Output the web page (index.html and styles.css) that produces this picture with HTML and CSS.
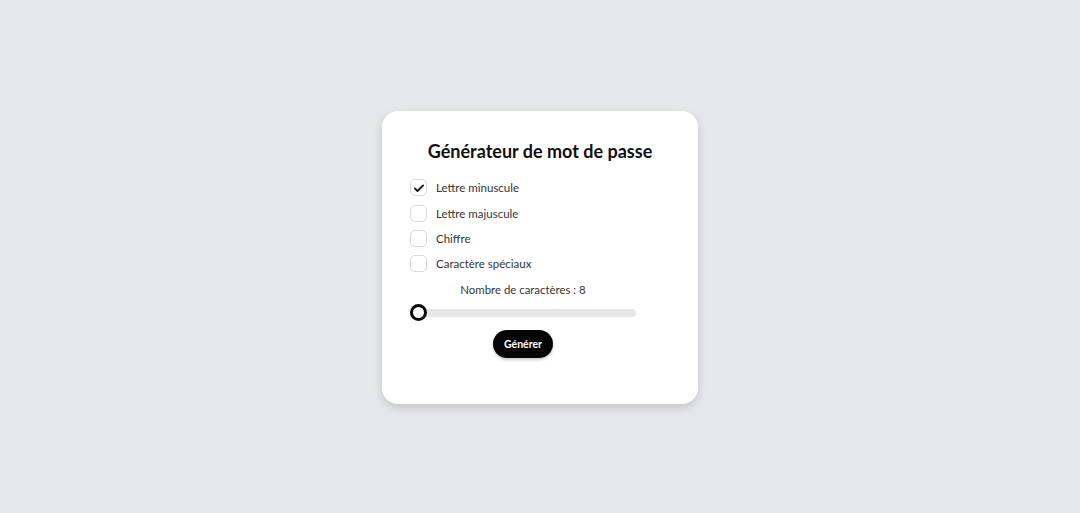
FILE: index.html
```html
<!DOCTYPE html>
<html lang="fr">
<head>
<meta charset="utf-8">
<title>Générateur de mot de passe</title>
<link rel="stylesheet" href="styles.css">
</head>
<body>
<main class="card">
  <h3 class="title">Générateur de mot de passe</h3>
  <form class="form">
    <label class="option">
      <span class="box checked"><svg viewBox="0 0 16 16" width="12" height="12"><path d="M2.5 8.5 L6 12 L13.5 4.5" fill="none" stroke="#111" stroke-width="2.4" stroke-linecap="round" stroke-linejoin="round"/></svg></span>
      <span class="text">Lettre minuscule</span>
    </label>
    <label class="option">
      <span class="box"></span>
      <span class="text">Lettre majuscule</span>
    </label>
    <label class="option">
      <span class="box"></span>
      <span class="text">Chiffre</span>
    </label>
    <label class="option">
      <span class="box"></span>
      <span class="text">Caractère spéciaux</span>
    </label>
    <p class="count">Nombre de caractères : 8</p>
    <input class="range" type="range" min="8" max="50" value="8">
    <button type="button" class="btn">Générer</button>
  </form>
</main>
</body>
</html>
```
FILE: styles.css
```css
* { box-sizing: border-box; }
html, body { margin: 0; height: 100%; }
body {
  background: #e5e7eb;
  display: flex;
  align-items: center;
  justify-content: center;
  font-family: Lato, "Noto Sans", sans-serif;
  color: #222;
}
.card {
  width: 316px;
  height: 293px;
  background: #fff;
  border-radius: 16px;
  padding: 28px 28px 0;
  box-shadow: 0 4px 10px rgba(0,0,0,0.14);
  margin-top: 2px;
}
.title {
  margin: 0 -20px 11px;
  text-align: center;
  white-space: nowrap;
  font-size: 18px;
  line-height: 25px;
  font-weight: 700;
  color: #111;
}
.form {
  width: 226px;
  display: flex;
  flex-direction: column;
  align-items: flex-start;
}
.option {
  display: flex;
  align-items: center;
  gap: 9px;
  height: 25.4px;
  font-size: 11.5px;
  color: #333;
}
.box {
  width: 17px;
  height: 17px;
  border: 1px solid #d9d9d9;
  border-radius: 5px;
  display: flex;
  align-items: center;
  justify-content: center;
  background: #fff;
}
.count {
  align-self: stretch;
  text-align: center;
  margin: 4px 0 0;
  font-size: 11.4px;
  line-height: 17px;
  color: #333;
}
.range {
  -webkit-appearance: none;
  appearance: none;
  width: 226px;
  height: 16px;
  margin: 7px 0 0;
  background: transparent;
}
.range::-webkit-slider-runnable-track {
  height: 8px;
  background: #e6e6e6;
  border-radius: 4px;
}
.range::-webkit-slider-thumb {
  -webkit-appearance: none;
  width: 17px;
  height: 17px;
  border-radius: 50%;
  background: #fff;
  border: 3px solid #0a0a0a;
  margin-top: -4.5px;
}
.btn {
  align-self: center;
  margin-top: 9px;
  width: 60px;
  height: 28px;
  border: none;
  border-radius: 14px;
  background: #050505;
  color: #fff;
  font-family: inherit;
  font-size: 10.5px;
  font-weight: 700;
  box-shadow: 0 2px 3px rgba(0,0,0,0.2);
  padding: 0;
}
```
